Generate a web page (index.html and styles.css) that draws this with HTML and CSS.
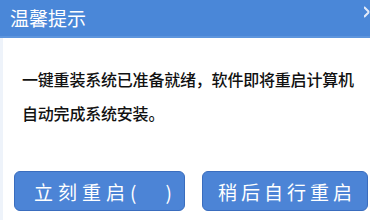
FILE: index.html
```html
<!DOCTYPE html>
<html lang="zh">
<head>
    <meta charset="UTF-8">
    <title>温馨提示</title>
    <link rel="stylesheet" href="styles.css">
</head>
<body>
    <div class="dialog">
        <div class="titleBar">
            <span class="title">温馨提示</span>
            <svg class="close" width="6" height="16" viewBox="0 0 6 16">
                <path d="M0 3 L5 8 M0 13 L5 8" stroke="#e3ebf9" stroke-width="2" fill="none"/>
            </svg>
        </div>
        <div class="message">
            <p>一键重装系统已准备就绪，软件即将重启计算机</p>
            <p>自动完成系统安装。</p>
        </div>
        <div class="buttons">
            <button class="btn first">立刻重启(　)</button>
            <button class="btn">稍后自行重启</button>
        </div>
    </div>
</body>
</html>
```

FILE: styles.css
```css
* {
    margin: 0px;
    padding: 0px;
    box-sizing: border-box;
}

body {
    width: 370px;
    height: 220px;
    overflow: hidden;
    background-color: #fff;
    font-family: "Noto Sans CJK SC", sans-serif;
}

.dialog {
    height: 220px;
    border-left: 3px solid #eef3fa;
}

.titleBar {
    height: 38px;
    margin-left: -3px;
    background-color: #4a87d8;
    border-bottom: 2px solid #5d95dd;
    display: flex;
    justify-content: space-between;
    align-items: flex-start;
    padding-left: 10px;
    overflow: hidden;
}

.title {
    color: #fff;
    font-size: 19px;
    line-height: 20px;
    margin-top: 8px;
}

.close {
    margin-top: 4px;
}

.message {
    padding: 24px 0px 0px 19px;
    height: 133px;
}

.message p {
    font-size: 16px;
    line-height: 34px;
    color: #111;
    font-weight: 500;
    letter-spacing: -0.2px;
}

.buttons {
    display: flex;
    gap: 17px;
    padding-left: 11px;
}

.btn {
    height: 40px;
    background-color: #4c84d6;
    border: 1px solid #3a6dbe;
    border-radius: 6px;
    color: #fff;
    font-family: "Noto Sans CJK SC", sans-serif;
    font-size: 19px;
    letter-spacing: 4px;
    width: 166px;
    padding-left: 4px;
}

.btn.first {
    width: 171px;
    text-align: left;
    padding-left: 19px;
    letter-spacing: 5px;
}
```
